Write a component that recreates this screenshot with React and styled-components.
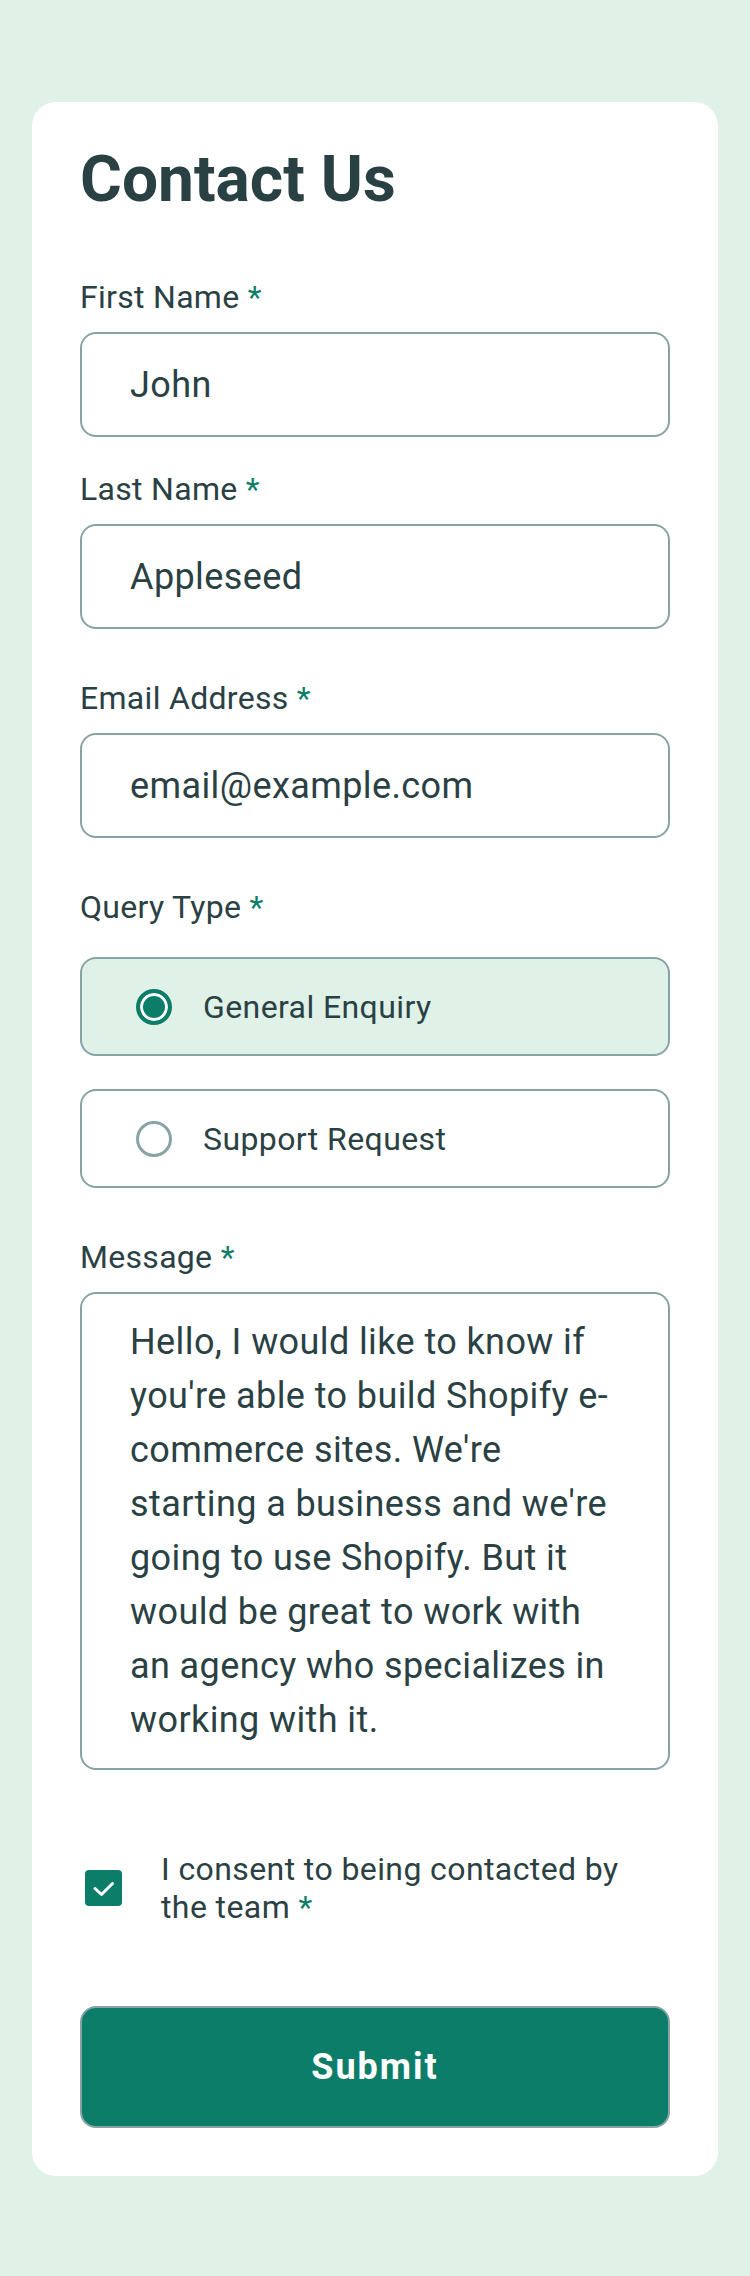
import React from 'react';
import styled, { createGlobalStyle } from 'styled-components';

const green = '#0c7d69';
const greenLight = '#e0f1e8';
const grey = '#87a3a6';
const ink = '#2a4144';

const GlobalStyle = createGlobalStyle`
  * { box-sizing: border-box; }
  body {
    margin: 0;
    background: ${greenLight};
    font-family: Roboto, "Liberation Sans", sans-serif;
    color: ${ink};
  }
`;

const Page = styled.main`
  padding: 102px 32px 100px;
`;

const Card = styled.section`
  background: #fff;
  border-radius: 24px;
  padding: 48px;
`;

const Title = styled.h1`
  margin: 0 0 68px;
  font-size: 64px;
  line-height: 60px;
  font-weight: 700;
`;

const Form = styled.form`
  display: flex;
  flex-direction: column;
  gap: 80px;
`;

const Stack = styled.div`
  display: flex;
  flex-direction: column;
  gap: ${props => props.$gap}px;
`;

const Label = styled.label`
  font-size: 32px;
  line-height: 38px;
  letter-spacing: 0.3px;
`;

const Req = styled.span`
  color: ${green};
`;

const TextInput = styled.input`
  width: 100%;
  height: 105px;
  padding: 0 48px;
  border: 2px solid ${grey};
  border-radius: 16px;
  font-family: inherit;
  font-size: 36px;
  letter-spacing: 0.4px;
  color: ${ink};
  outline: none;
`;

const TextArea = styled.textarea`
  display: block;
  width: 100%;
  height: 478px;
  padding: 21px 54px 21px 48px;
  border: 2px solid ${grey};
  border-radius: 16px;
  font-family: inherit;
  font-size: 36px;
  line-height: 54px;
  letter-spacing: 0.4px;
  color: ${ink};
  resize: none;
  overflow: hidden;
  outline: none;
`;

const Option = styled.label`
  display: flex;
  align-items: center;
  gap: 31px;
  height: 99px;
  padding-left: 54px;
  border: 2px solid ${grey};
  border-radius: 16px;
  background: ${props => (props.$active ? greenLight : '#fff')};
  font-size: 32px;
  line-height: 38px;
  letter-spacing: 0.4px;
`;

const Radio = styled.input`
  appearance: none;
  margin: 0;
  flex: none;
  width: 36px;
  height: 36px;
  border-radius: 50%;
  border: 3.5px solid ${grey};
  background: #fff;

  &:checked {
    border: 4px solid ${green};
    background: ${green};
    box-shadow: inset 0 0 0 3px #fff;
  }
`;

const Consent = styled.label`
  display: flex;
  align-items: center;
  gap: 39px;
  padding-left: 5px;
`;

const CheckBox = styled.span`
  flex: none;
  display: flex;
  width: 37px;
  height: 36px;
  border-radius: 4px;
  background: ${green};
`;

const ConsentText = styled.span`
  padding-right: 30px;
  font-size: 32px;
  line-height: 38px;
  letter-spacing: 0.4px;
`;

const Submit = styled.button`
  height: 122px;
  border: 2px solid ${grey};
  border-radius: 16px;
  background: ${green};
  color: #fff;
  font-family: inherit;
  font-size: 36px;
  font-weight: 700;
  letter-spacing: 2px;
`;

const message =
  "Hello, I would like to know if you're able to build Shopify e-commerce sites. We're starting a business and we're going to use Shopify. But it would be great to work with an agency who specializes in working with it.";

const Field = ({ id, label, children }) => (
  <Stack $gap={16}>
    <Label htmlFor={id}>
      {label} <Req>*</Req>
    </Label>
    {children}
  </Stack>
);

const App = () => (
  <Page>
    <GlobalStyle />
    <Card>
      <Title>Contact Us</Title>
      <Form onSubmit={e => e.preventDefault()}>
        <Stack $gap={50}>
          <Stack $gap={33}>
            <Field id="first" label="First Name">
              <TextInput id="first" defaultValue="John" />
            </Field>
            <Field id="last" label="Last Name">
              <TextInput id="last" defaultValue="Appleseed" />
            </Field>
          </Stack>
          <Field id="email" label="Email Address">
            <TextInput id="email" type="email" defaultValue="email@example.com" />
          </Field>
          <Stack $gap={31} role="radiogroup" aria-labelledby="query">
            <Label id="query">
              Query Type <Req>*</Req>
            </Label>
            <Stack $gap={33}>
              <Option $active>
                <Radio type="radio" name="query" defaultChecked />
                General Enquiry
              </Option>
              <Option>
                <Radio type="radio" name="query" />
                Support Request
              </Option>
            </Stack>
          </Stack>
          <Field id="message" label="Message">
            <TextArea id="message" defaultValue={message} />
          </Field>
        </Stack>
        <Consent>
          <CheckBox role="checkbox" aria-checked="true">
            <svg width="37" height="36" viewBox="0 0 37 36" fill="none">
              <path d="M10 18.5 L16.5 24.5 L27.5 13.5" stroke="#fff" strokeWidth="3" strokeLinecap="round" strokeLinejoin="round" />
            </svg>
          </CheckBox>
          <ConsentText>
            I consent to being contacted by the team <Req>*</Req>
          </ConsentText>
        </Consent>
        <Submit type="submit">Submit</Submit>
      </Form>
    </Card>
  </Page>
);

export default App;
